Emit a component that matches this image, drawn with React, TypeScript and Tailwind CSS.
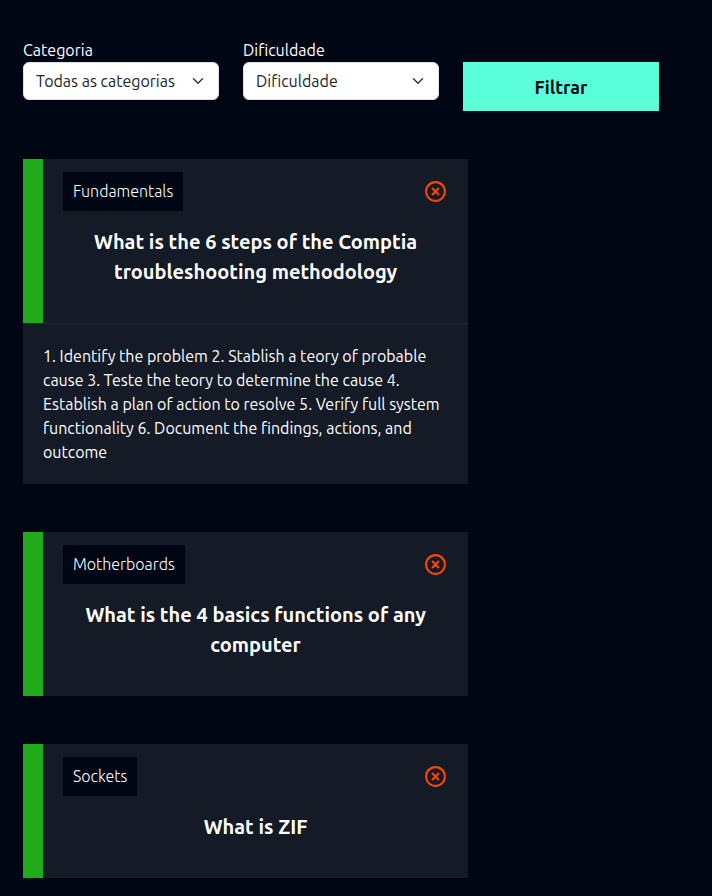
import { useState } from "react";
import { MdHighlightOff } from "react-icons/md";

type Card = { id: number; category: string; question: string; answer: string };

const cards: Card[] = [
  {
    id: 1,
    category: "Fundamentals",
    question: "What is the 6 steps of the Comptia troubleshooting methodology",
    answer:
      "1. Identify the problem 2. Stablish a teory of probable cause 3. Teste the teory to determine the cause 4. Establish a plan of action to resolve 5. Verify full system functionality 6. Document the findings, actions, and outcome",
  },
  { id: 2, category: "Motherboards", question: "What is the 4 basics functions of any computer", answer: "" },
  { id: 3, category: "Sockets", question: "What is ZIF", answer: "" },
];

function SelectField({ id, label, placeholder }: { id: string; label: string; placeholder: string }) {
  return (
    <div className="min-w-0">
      <label htmlFor={id} className="block text-base text-white">
        {label}
      </label>
      <div className="relative">
        <select
          id={id}
          className="block h-[38px] w-full appearance-none rounded-md border border-[#dee2e6] bg-white pr-9 pl-3 text-base text-[#212529]"
        >
          <option>{placeholder}</option>
        </select>
        <svg
          className="pointer-events-none absolute top-[13px] right-[15px] size-3"
          viewBox="0 0 16 16"
          fill="none"
          stroke="#343a40"
          strokeWidth="2"
          strokeLinecap="round"
          strokeLinejoin="round"
          aria-hidden="true"
        >
          <path d="m2 5 6 6 6-6" />
        </svg>
      </div>
    </div>
  );
}

function FlashCard({ card, open, onToggle }: { card: Card; open: boolean; onToggle: () => void }) {
  return (
    <article className="bg-[#141a26]">
      <div className="border-l-[20px] border-[#20aa1c] px-5 pt-[13px] pb-9">
        <div className="flex items-center justify-between">
          <span className="h-[39px] bg-[#000614] px-[10px] text-base leading-[39px] font-light">{card.category}</span>
          <button type="button" aria-label="Remover" className="text-[#ff4500]">
            <MdHighlightOff size={25} />
          </button>
        </div>
        <h2 className="mt-4 text-center text-xl leading-[30px] font-semibold">
          <button type="button" aria-expanded={open} onClick={onToggle} className="w-full">
            {card.question}
          </button>
        </h2>
      </div>
      {open && card.answer && (
        <p className="border-t border-[#222733] p-5 text-base">{card.answer}</p>
      )}
    </article>
  );
}

export default function App() {
  const [openId, setOpenId] = useState(1);
  return (
    <main className="min-h-screen bg-[#000614] pt-[38px] pr-[53px] pb-[18px] pl-[23px] font-['Ubuntu','Open_Sans',sans-serif] text-white">
      <form className="grid grid-cols-3 gap-6" onSubmit={(e) => e.preventDefault()}>
        <SelectField id="categoria" label="Categoria" placeholder="Todas as categorias" />
        <SelectField id="dificuldade" label="Dificuldade" placeholder="Dificuldade" />
        <button type="submit" className="mt-6 h-[49px] bg-[#5affd9] text-lg font-semibold text-[#000614]">
          Filtrar
        </button>
      </form>
      <section className="mt-12 flex w-[70%] flex-col gap-12">
        {cards.map((card) => (
          <FlashCard
            key={card.id}
            card={card}
            open={openId === card.id}
            onToggle={() => setOpenId(openId === card.id ? 0 : card.id)}
          />
        ))}
      </section>
    </main>
  );
}
